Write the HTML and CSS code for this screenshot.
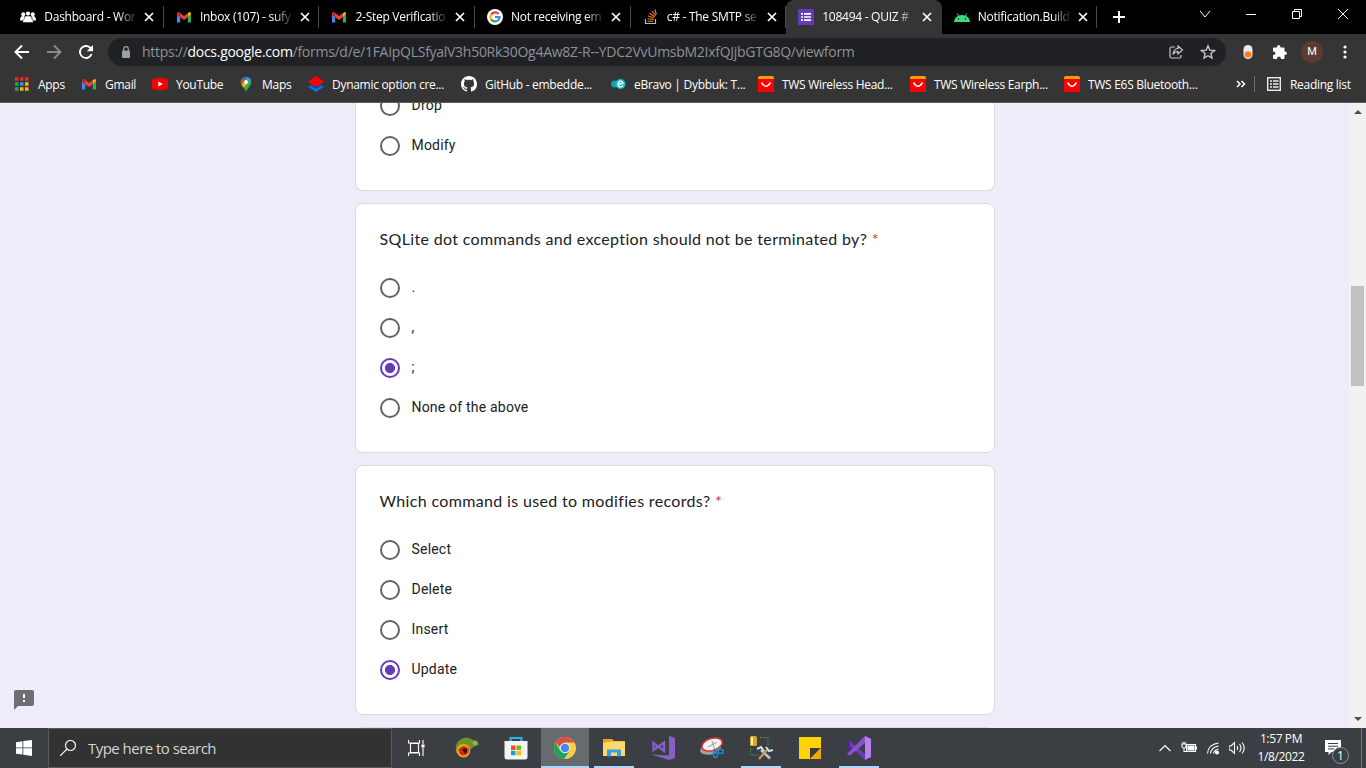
FILE: index.html
```html
<!DOCTYPE html>
<html lang="en">
<head>
<meta charset="utf-8">
<title>108494 - QUIZ #</title>
<link rel="stylesheet" href="styles.css">
</head>
<body>
<svg class="defs" width="0" height="0">
  <symbol id="close" viewBox="0 0 10 10"><path d="M1 1l8 8M9 1L1 9" stroke="#fff" stroke-width="1.7"/></symbol>
  <symbol id="gmail" viewBox="0 0 16 16"><path d="M1 4v9.500h3.200V7z" fill="#4285f4"/><path d="M15 4v9.500h-3.200V7z" fill="#34a853"/><path d="M11.800 4.500l1-1q2.200-1.200 2.200 1.200L11.800 8z" fill="#fbbc04"/><path d="M1 5Q1 2.500 3.200 3.300L8 7l3.800-3v4.200L8 11 4 8z" fill="#ea4335"/><path d="M1 4.700Q1 2.500 3 3.200L4.200 4v4.200L1 5.800z" fill="#c5221f"/></symbol>
  <symbol id="ali" viewBox="0 0 16 16"><rect width="16" height="16" rx="2" fill="#ff9800"/><path d="M0 3h16v11q0 2-2 2H2q-2 0-2-2z" fill="#f00"/><path d="M3.500 6.500Q8 14 12.500 6.500" fill="none" stroke="#fff" stroke-width="1.500"/></symbol>
  <symbol id="chrome" viewBox="0 0 24 24"><circle cx="12" cy="12" r="11" fill="#fc4"/><path d="M2.500 6.500A11 11 0 0 0 11 23l6-8.500-5-2.500-5 2.500z" fill="#1aa260"/><path d="M2.500 6.500A11 11 0 0 1 21.500 6.500H12L7 11z" fill="#dc4e41"/><circle cx="12" cy="12" r="5.200" fill="#eee"/><circle cx="12" cy="12" r="4.200" fill="#4587f3"/></symbol>
</svg>

<header class="tabs">
  <div class="tab"><svg class="ico" viewBox="0 0 16 16" fill="#fff"><circle cx="3.300" cy="5.200" r="2"/><circle cx="8" cy="4.600" r="2.100"/><circle cx="12.700" cy="5.200" r="2"/><path d="M0 11.500Q0 7 3 7q1.200 0 1.700.5L3 11.500zM16 11.500Q16 7 13 7q-1.200 0-1.700.5l1.700 4zM3 13.300q0-6 2.700-6h4.600q2.700 0 2.700 6z"/><path d="M5 7.500l-1.500 4M11 7.500l1.500 4" stroke="#000" stroke-width=".5"/></svg><span class="title">Dashboard - Wor</span><svg class="x"><use href="#close"/></svg></div>
  <div class="tab"><svg class="ico"><use href="#gmail"/></svg><span class="title">Inbox (107) - sufy</span><svg class="x"><use href="#close"/></svg></div>
  <div class="tab"><svg class="ico"><use href="#gmail"/></svg><span class="title">2-Step Verificatio</span><svg class="x"><use href="#close"/></svg></div>
  <div class="tab"><svg class="ico" viewBox="0 0 16 16"><circle cx="8" cy="8" r="8" fill="#fff"/><g fill="none" stroke-width="2.200"><path d="M4.200 5.600A4.500 4.500 0 0 1 11.500 5" stroke="#ea4335"/><path d="M4.200 10.400A4.500 4.500 0 0 1 4.200 5.600" stroke="#fbbc05"/><path d="M4.200 10.400A4.500 4.500 0 0 0 11 11.300" stroke="#34a853"/><path d="M8 8h4.500Q12.500 10 11 11.300" stroke="#4285f4"/></g></svg><span class="title">Not receiving em</span><svg class="x"><use href="#close"/></svg></div>
  <div class="tab"><svg class="ico" viewBox="0 0 16 16" fill="none"><path d="M2.500 10v4.500h10V10" stroke="#bcbbbb" stroke-width="1.200"/><path d="M4.500 12.300h6M4.600 9.700l6 .8M5.200 7l5.700 2M6.700 4.200l5 3.500M9 2l3.700 4.700M12 .5l1.300 5" stroke="#f48024" stroke-width="1.100"/></svg><span class="title">c# - The SMTP se</span><svg class="x"><use href="#close"/></svg></div>
  <div class="tab active"><svg class="ico" viewBox="0 0 16 16"><rect width="16" height="16" rx="1" fill="#673ab7"/><path d="M3 4.800h2M3 8h2M3 11.200h2M6 4.800h7M6 8h7M6 11.200h7" stroke="#fff" stroke-width="1.700"/></svg><span class="title">108494 - QUIZ #</span><svg class="x"><use href="#close"/></svg></div>
  <div class="tab"><svg class="ico" viewBox="0 0 16 16"><path d="M0 13q.5-4.500 4-6L2.700 4.500l.6-.3L4.800 6.600q3.200-1.200 6.400 0l1.500-2.400.6.3L12 7q3.500 1.500 4 6z" fill="#3ddc84"/><circle cx="4.500" cy="10" r=".7"/><circle cx="11.500" cy="10" r=".7"/></svg><span class="title">Notification.Build</span><svg class="x"><use href="#close"/></svg></div>
  <svg class="plus" viewBox="0 0 12 12"><path d="M6 0v12M0 6h12" stroke="#fff" stroke-width="2"/></svg>
  <div class="window-buttons">
    <svg viewBox="0 0 12 12"><path d="M1 3l5 6 5-6"/></svg>
    <svg viewBox="0 0 12 12"><path d="M1 6.500h10"/></svg>
    <svg viewBox="0 0 12 12"><path d="M1.500 3.500h7v7h-7zM3.500 3.500v-2h7v7h-2"/></svg>
    <svg viewBox="0 0 12 12"><path d="M1 1l10 10M11 1L1 11"/></svg>
  </div>
</header>

<div class="toolbar">
  <svg class="nav" viewBox="0 0 16 16"><path d="M15 8H2M8 1.500L1.500 8 8 14.500" stroke="#fff"/></svg>
  <svg class="nav" viewBox="0 0 16 16"><path d="M1 8h13M8 1.500L14.500 8 8 14.500" stroke="#8a8a8a"/></svg>
  <svg class="nav" viewBox="0 0 16 16"><path d="M13.600 10A6 6 0 1 1 12 3.500l1.500 1.500" stroke="#fff"/><path d="M15 1v6.200H8.800z" fill="#fff" stroke="none"/></svg>
  <div class="address">
    <svg class="lock" viewBox="0 0 10 12"><rect x="1" y="4.500" width="8" height="7.500" rx="1" fill="#9aa0a6"/><path d="M2.700 5V3a2.300 2.300 0 0 1 4.600 0v2" fill="none" stroke="#9aa0a6" stroke-width="1.200"/></svg>
    <span class="url"><span class="scheme">https://</span><b>docs.google.com</b><span class="path">/forms/d/e/1FAIpQLSfyalV3h50Rk30Og4Aw8Z-R--YDC2VvUmsbM2IxfQJjbGTG8Q/viewform</span></span>
    <svg class="act" viewBox="0 0 16 16" fill="none" stroke="#c4c7c9" stroke-width="1.200"><path d="M7 3H3.500Q2 3 2 4.500v8Q2 14 3.500 14h8q1.500 0 1.500-1.500V11"/><path d="M10 2l4.500 4L10 10V7.700Q6.500 7.500 5 10.500 5.500 5 10 4.500z"/></svg>
    <svg class="act" viewBox="0 0 16 16" fill="none" stroke="#c4c7c9" stroke-width="1.400"><path d="M8 1.800l1.800 4.300 4.700.4-3.600 3 1.100 4.600L8 11.700 4 14.100l1.100-4.600-3.600-3 4.700-.4z"/></svg>
  </div>
  <svg class="ext" viewBox="0 0 16 16"><rect x="3.500" y="1" width="9" height="14" rx="4.500" fill="#e8eaed"/><circle cx="8" cy="10.500" r="3.300" fill="#ff7a1a"/></svg>
  <svg class="ext puzzle" viewBox="0 0 16 16"><path d="M1 4.500Q1 3.500 2 3.500h3q-.3-2.500 1.700-2.500T8.500 3.500h3q1 0 1 1v3q2.500-.2 2.500 1.800t-2.500 1.700v3q0 1-1 1H9q.2-2.500-2-2.500T5 15H2q-1 0-1-1v-3q2.500.2 2.500-1.700T1 7.500z" fill="#fff"/></svg>
  <span class="avatar">M</span>
  <svg class="menu" viewBox="0 0 4 14" fill="#fff"><circle cx="2" cy="2" r="1.600"/><circle cx="2" cy="7" r="1.600"/><circle cx="2" cy="12" r="1.600"/></svg>
</div>

<nav class="bookmarks">
  <div class="bm"><svg class="ico" viewBox="0 0 16 16"><path d="M1 3h3.500M6 3h3.500M11 3h3.500" stroke="#ea2a1f" stroke-width="3.500"/><path d="M1 8h3.500" stroke="#1ca85a" stroke-width="3.500"/><path d="M6 8h3.500" stroke="#2196f3" stroke-width="3.500"/><path d="M11 8h3.500" stroke="#fbb400" stroke-width="3.500"/><path d="M1 13h3.500" stroke="#1ca85a" stroke-width="3.500"/><path d="M6 13h3.500M11 13h3.500" stroke="#fbb400" stroke-width="3.500"/></svg><span>Apps</span></div>
  <div class="bm"><svg class="ico"><use href="#gmail"/></svg><span>Gmail</span></div>
  <div class="bm"><svg class="ico" viewBox="0 0 16 16"><rect y="2.300" width="16" height="11.500" rx="3" fill="#f00"/><path d="M6.300 5.500v5L10.800 8z" fill="#fff"/></svg><span>YouTube</span></div>
  <div class="bm"><svg class="ico" viewBox="0 0 16 16"><path d="M2.700 6a5.300 5.300 0 0 1 10.600 0q0 3-2.500 5.500Q9 13 8 16 7 13 5.200 11 2.700 8.500 2.700 6z" fill="#34a853"/><path d="M9.700 1L5.500 6 4 3Q6.500 0 9.700 1z" fill="#1a73e8"/><path d="M4 2.700L6.500 5l-3 3.600Q1.500 5.500 4 2.700z" fill="#ea4335"/><path d="M3.700 9l6-7 3 1.500Q10.500 7 5.700 11.700z" fill="#fbbc04"/><path d="M9.700 1l3 2.500L9.500 7.500 8 6z" fill="#4285f4"/><circle cx="8" cy="6" r="1.900" fill="#fff"/></svg><span>Maps</span></div>
  <div class="bm"><svg class="ico" viewBox="0 0 16 16"><path d="M8 6.500l8 4-8 5.500-8-5.500z" fill="#0878e8"/><path d="M1.500 9.500L8 13l6.500-3.500L8 8z" fill="#064fa8"/><path d="M8 0l8 5.500-8 5.500-8-5.500z" fill="#f00"/></svg><span>Dynamic option cre...</span></div>
  <div class="bm"><svg class="ico" viewBox="0 0 16 16"><path fill="#fff" d="M8 0C3.580 0 0 3.580 0 8c0 3.540 2.290 6.530 5.470 7.590.4.070.55-.17.55-.38 0-.19-.01-.82-.01-1.490-2.010.37-2.530-.49-2.690-.94-.09-.23-.48-.94-.82-1.130-.28-.15-.68-.52-.01-.53.63-.01 1.080.58 1.230.82.72 1.210 1.870.87 2.330.66.07-.52.28-.87.51-1.070-1.780-.2-3.640-.89-3.640-3.950 0-.87.31-1.590.82-2.150-.08-.2-.36-1.020.08-2.120 0 0 .67-.21 2.200.82.64-.18 1.320-.27 2-.27s1.360.09 2 .27c1.530-1.040 2.200-.82 2.200-.82.44 1.100.16 1.920.08 2.120.51.56.82 1.270.82 2.150 0 3.070-1.870 3.750-3.650 3.950.29.25.54.73.54 1.480 0 1.070-.01 1.930-.01 2.200 0 .21.15.46.55.38A8.010 8.010 0 0 0 16 8c0-4.420-3.580-8-8-8z"/></svg><span>GitHub - embedde...</span></div>
  <div class="bm"><svg class="ico" viewBox="0 0 16 16"><ellipse cx="5" cy="8" rx="4" ry="3.500" fill="#06a6b5"/><ellipse cx="10.500" cy="8" rx="5" ry="5" fill="#0dbdcb"/><path d="M7.500 8.500L13 7.200Q12.500 5 10.500 5.200 8.200 5.500 8.200 8.200t2.500 2.700q1.300 0 2.300-1.300" fill="none" stroke="#fff" stroke-width="1.300"/></svg><span>eBravo | Dybbuk: T...</span></div>
  <div class="bm"><svg class="ico"><use href="#ali"/></svg><span>TWS Wireless Head...</span></div>
  <div class="bm"><svg class="ico"><use href="#ali"/></svg><span>TWS Wireless Earph...</span></div>
  <div class="bm"><svg class="ico"><use href="#ali"/></svg><span>TWS E6S Bluetooth...</span></div>
  <svg class="more" viewBox="0 0 10 8"><path d="M1 1l3 3-3 3M5.500 1l3 3-3 3" fill="none" stroke="#fff" stroke-width="1.500"/></svg>
  <div class="bm reading"><svg class="ico" viewBox="0 0 16 16" fill="none" stroke="#e8eaed"><rect x="1.700" y="1.700" width="12.600" height="12.600" stroke-width="1.400"/><path d="M4 5h2M4 8h2M4 11h2M7 5h5.500M7 8h5.500M7 11h5.500" stroke-width="1.500"/></svg><span>Reading list</span></div>
</nav>

<main class="page">
  <div class="form">
    <section class="card continued">
      <label class="option"><i class="radio"></i><span>Drop</span></label>
      <label class="option"><i class="radio"></i><span>Modify</span></label>
    </section>
    <section class="card">
      <h2>SQLite dot commands and exception should not be terminated by? <em>*</em></h2>
      <label class="option"><i class="radio"></i><span>.</span></label>
      <label class="option"><i class="radio"></i><span>,</span></label>
      <label class="option"><i class="radio on"></i><span>;</span></label>
      <label class="option"><i class="radio"></i><span>None of the above</span></label>
    </section>
    <section class="card">
      <h2>Which command is used to modifies records? <em>*</em></h2>
      <label class="option"><i class="radio"></i><span>Select</span></label>
      <label class="option"><i class="radio"></i><span>Delete</span></label>
      <label class="option"><i class="radio"></i><span>Insert</span></label>
      <label class="option"><i class="radio on"></i><span>Update</span></label>
    </section>
    <section class="card"></section>
  </div>
  <svg class="report" viewBox="0 0 20 20"><path d="M2 0h16q2 0 2 2v12q0 2-2 2H4l-4 4V2q0-2 2-2z" fill="#716d75"/><path d="M10 4v4M10 10v2" stroke="#fff" stroke-width="2"/></svg>
  <div class="scrollbar"><svg viewBox="0 0 8 4"><path d="M0 4l4-4 4 4z" fill="#505050"/></svg><div class="thumb"></div><svg viewBox="0 0 8 4"><path d="M0 0l4 4 4-4z" fill="#505050"/></svg></div>
</main>

<footer class="taskbar">
  <div class="start"><svg viewBox="0 0 16 16" fill="#fff"><path d="M0 2.200L6.500 1.300v6.200H0zM7.300 1.100L16 0v7.500H7.300zM0 8.300h6.500v6.300L0 13.700zM7.300 8.300H16V16l-8.700-1.200z"/></svg></div>
  <div class="search"><svg viewBox="0 0 16 16" fill="none" stroke="#f2f2f2" stroke-width="1.200"><circle cx="10.500" cy="5.500" r="5"/><path d="M7 9L0 16"/></svg><span>Type here to search</span></div>
  <div class="apps">
    <div class="app"><svg viewBox="0 0 24 24" fill="none" stroke="#fff" stroke-width="1.100"><path d="M4.500 4v3h11V4M4.500 20v-3h11v3M6.500 7.500h8v9h-8z"/><path d="M19 4v4M19 12v8"/><rect x="18" y="9" width="2" height="2" fill="#fff"/></svg></div>
    <div class="app"><svg viewBox="0 0 24 24" fill="none"><path d="M1.500 17Q-1 8 5 4 11-1 18 4q6 0 5.500 5l-5.500 2q-1 4-5 0L8 8q-3 2-4 9z" fill="#6f9424"/><circle cx="8.500" cy="14.800" r="5.500" fill="#2a1a0c" stroke="#f3a81c" stroke-width="2.600"/><path d="M4 13Q5 19 9 18.500q4-.5 4-4T9 11.500t-2.500 3 2.500 2" stroke="#e52e17" stroke-width="1.800"/><circle cx="20" cy="7" r="1.600" fill="#eee"/><circle cx="20" cy="7" r=".7" fill="#111"/></svg></div>
    <div class="app"><svg viewBox="0 0 24 24"><path d="M6.500 6V2h11v4" fill="none" stroke="#29b1ee" stroke-width="2.200"/><path d="M.5 5h23v16q0 2.500-2.500 2.500H3Q.5 23.500.5 21z" fill="#f3f3f3"/><path d="M7 9.500h4.500V14H7z" fill="#f25022"/><path d="M12.500 9.500H17V14h-4.500z" fill="#7fba00"/><path d="M7 14.800h4.500v4.500H7z" fill="#00a4ef"/><path d="M12.500 14.800H17v4.500h-4.500z" fill="#ffb900"/></svg></div>
    <div class="app current"><svg><use href="#chrome"/></svg></div>
    <div class="app open"><svg viewBox="0 0 24 24"><path d="M1 3h9l2 2h11v15H1z" fill="#e9a81e"/><path d="M1 7l10-1.500h12V20H1z" fill="#ffd86b"/><path d="M5 20.500v-7h14v7h-4v-4H9v4z" fill="#3d9de0"/></svg></div>
    <div class="app"><svg viewBox="0 0 24 24" fill="none"><path d="M18 0l6 2v20l-6 2L0 18.500l18 1z" fill="#865fc5"/><path d="M2.500 7v7L13 6.500v8.500z" stroke="#865fc5" stroke-width="2.300"/></svg></div>
    <div class="app"><svg viewBox="0 0 24 24" fill="none"><ellipse cx="10.500" cy="13" rx="10.500" ry="5.500" transform="rotate(-12 10.500 13)" fill="#9da2a5"/><ellipse cx="12" cy="8.500" rx="10.500" ry="6" transform="rotate(-18 12 8.500)" fill="#f2f2f2" stroke="#d93735" stroke-width="1.500"/><path d="M8 11l9-5M12 5l3 9" stroke="#939ca3"/><g stroke="#1687c9" stroke-width="1.700"><path d="M14 13l3 3"/><ellipse cx="15.500" cy="18.500" rx="2" ry="3"/><ellipse cx="20.500" cy="15.500" rx="3" ry="2"/></g></svg></div>
    <div class="app open"><svg viewBox="0 0 24 24" fill="none"><rect x="1" width="7" height="10" rx="1.500" fill="#d9a52a"/><path d="M3 1v8" stroke="#fff0ae" stroke-width="2"/><path d="M11 1.500h8v9M1.500 12v7h8" stroke="#4aa13a" stroke-dasharray="1.500 1.300"/><path d="M12 14l9 8.500" stroke="#b7c4d2" stroke-width="2.500"/><path d="M18 14l-8 9" stroke="#c39e50" stroke-width="2.300"/><path d="M8 13l4-2 3 4M17 11l3 4 4-1" stroke="#d4e0ec" stroke-width="2"/></svg></div>
    <div class="app"><svg viewBox="0 0 24 24"><path d="M1 1h22v22H1z" fill="#ffd208"/><path d="M12 12h11L12 23z" fill="#3b3b3b"/><path d="M23 12v11H12z" fill="#eda900"/></svg></div>
    <div class="app open"><svg viewBox="0 0 24 24"><path d="M0 6l3-1 15 13v6L3 10v5l-3 3z" fill="#6d3ab9"/><path d="M0 6l3-1v13.500L0 18z" fill="#56259d"/><path d="M0 18l3 1.500L18 7V0z" fill="#8c50d1"/><path d="M18 0l6 3v18l-6 3z" fill="#b680f2"/></svg></div>
  </div>
  <div class="tray">
    <svg viewBox="0 0 16 16"><path d="M2.500 11L8 5.500l5.500 5.500"/></svg>
    <svg viewBox="0 0 16 16"><path d="M5.500 4.500h9v7h-9zM1 4h4v2.500Q5 8 3 8T1 6.500zM2 1.800V4M4 1.800V4M3 8v3.500h2.500M15.500 6.500v3"/><path d="M7 6h6v4H7z" fill="#fff"/></svg>
    <svg viewBox="0 0 16 16"><path d="M2.500 13.500Q3 4.500 13.500 3M5.500 13.500Q6 7.500 13.500 6M8.500 13.500Q9 10 13.500 9"/><circle cx="12" cy="12.500" r="1.500" fill="#fff"/></svg>
    <svg viewBox="0 0 16 16"><path d="M0 6h2l3.500-3.500v11L2 10H0zM8 6q1.500 2 0 4M10.500 4q3 4 0 8M13 2.500q4.500 5.500 0 11"/></svg>
  </div>
  <div class="clock"><span>1:57 PM</span><span>1/8/2022</span></div>
  <div class="notice"><svg viewBox="0 0 16 16"><path d="M0 0h16v12H6.500L3.500 15v-3H0z" fill="#fff"/><path d="M3 3.500h10M3 6.200h10M3 8.900h6" stroke="#3b3f43" stroke-width="1"/></svg><span class="count">1</span></div>
</footer>
</body>
</html>
```

FILE: styles.css
```css
* { box-sizing: border-box; }
body { margin: 0; width: 1366px; height: 768px; overflow: hidden; display: flex; flex-direction: column; font-family: "Open Sans", "Noto Sans", sans-serif; font-size: 12px; }
.defs { position: absolute; }
svg { display: block; flex: none; }
.ico { width: 16px; height: 16px; }

.tabs { height: 34px; background: #000; display: flex; padding-left: 8.300px; color: #fff; }
.tab { width: 155.600px; height: 34px; display: flex; align-items: center; padding-left: 12px; border-right: 1px solid transparent; border-image: linear-gradient(transparent 7px, #4a4a4a 7px, #4a4a4a 27px, transparent 27px) 1; }
.tab .title { width: 94px; margin: -1px 6px 0 8px; white-space: nowrap; letter-spacing: -.27px; mask-image: linear-gradient(90deg, #000 74px, transparent 94px); }
.tab .x { width: 10px; height: 10px; }
.tab.active { background: #353535; border-image: none; border: 0; border-radius: 8px 8px 0 0; }
.plus { width: 12px; height: 12px; margin: 11px 0 0 16px; }
.window-buttons { display: flex; gap: 34px; margin: 8px 17px 0 auto; }
.window-buttons svg { width: 12px; height: 12px; fill: none; stroke: #fff; stroke-width: 1; }

.toolbar { height: 34px; background: #353535; display: flex; align-items: center; padding: 2px 0 0 14px; }
.nav { width: 16px; height: 16px; margin-right: 16px; fill: none; stroke-width: 1.900; }
.nav:nth-child(3) { margin-right: 14px; }
.address { width: 1118px; height: 28px; border-radius: 14px; background: #202124; display: flex; align-items: center; padding: 0 10px 0 13px; }
.lock { width: 10px; height: 12px; margin-right: 11px; }
.url { flex: 1; margin-top: -1px; font-size: 14px; white-space: nowrap; color: #8f9296; letter-spacing: -.28px; }
.url b { color: #fff; font-weight: 400; }
.act { width: 16px; height: 16px; margin-left: 16px; }
.ext { width: 16px; height: 16px; margin-left: 14px; }
.puzzle { margin-left: 16px; }
.avatar { width: 22px; height: 22px; border-radius: 50%; margin-left: 13px; background: #5d3a32; color: #fff; text-align: center; line-height: 22px; font-family: Roboto, sans-serif; font-size: 11px; }
.menu { width: 4px; height: 14px; margin-left: 20px; }

.bookmarks { height: 35px; background: #353535; border-bottom: 1px solid #5c5c5c; color: #fff; padding: 0 0 2px 14px; display: grid; align-items: center; grid-template-columns: 67px 71px 86px 70px 153px 149px 148px 152px 154px 172px 18px 1fr; }
.bm { display: flex; align-items: center; gap: 8px; white-space: nowrap; letter-spacing: -.29px; }
.more { width: 10px; height: 8px; }
.reading { height: 16px; border-left: 1px solid #707070; padding-left: 11px; }

.page { height: 625px; background: #f0ebf8; position: relative; overflow: hidden; display: flex; }
.form { width: 640px; margin-left: 355px; display: flex; flex-direction: column; gap: 12px; }
.card { flex: none; height: 250px; background: #fff; border: 1px solid #dadce0; border-radius: 8px; padding: 0 23.500px; color: #202124; }
.card.continued { height: 105px; margin-top: -17px; border-top: 0; border-radius: 0 0 8px 8px; }
.card h2 { margin: 0; height: 64px; padding-top: 23px; font: 400 16px/24px Lato, sans-serif; letter-spacing: .34px; white-space: nowrap; }
.card em { color: #d93025; font-style: normal; }
.option { height: 40px; display: flex; align-items: center; gap: 12px; font: 14px/20px Roboto, sans-serif; letter-spacing: .2px; }
.option span { margin-top: -2px; }
.radio { width: 20px; height: 20px; border: 2px solid #5f6368; border-radius: 50%; }
.radio.on { border-color: #673ab7; background: radial-gradient(circle, #673ab7 4.700px, transparent 5.300px); }
.report { position: absolute; left: 14px; bottom: 18px; width: 20px; height: 20px; }
.scrollbar { width: 17px; margin-left: auto; background: #f1f1f1; display: flex; flex-direction: column; align-items: center; padding: 7px 0; }
.scrollbar svg { width: 8px; height: 4px; }
.thumb { width: 13px; height: 100px; margin-top: 172px; margin-bottom: auto; background: #c1c1c1; }

.taskbar { height: 40px; background: #3b3f43; display: flex; color: #fff; position: relative; }
.start { width: 48px; display: flex; align-items: center; justify-content: center; }
.start svg { width: 16px; height: 16px; }
.search { width: 344px; background: #323232; border: 1px solid #5a5a5a; display: flex; align-items: center; padding-left: 11px; gap: 12px; font-size: 15px; color: #d5d5d5; letter-spacing: -.53px; }
.search svg { width: 16px; height: 16px; }
.apps { display: grid; grid-template-columns: repeat(10, 49px); padding-left: 2px; }
.app { display: flex; justify-content: center; padding-top: 8px; width: 48px; }
.app:first-child { margin-left: -2px; }
.app svg { width: 24px; height: 24px; }
.current { background: #676b6e; border-bottom: 2px solid #a9d6fa; }
.open { background: linear-gradient(#a9d6fa, #a9d6fa) center bottom / 40px 2px no-repeat; }
.tray { display: flex; align-items: center; gap: 8px; margin-left: auto; }
.tray svg { width: 16px; height: 16px; fill: none; stroke: #fff; stroke-width: 1.100; }
.clock { width: 56px; margin-left: 8px; display: flex; flex-direction: column; align-items: center; padding-top: 2px; line-height: 18px; letter-spacing: -.38px; white-space: nowrap; }
.notice { width: 53px; padding: 12px 0 0 16px; border-right: 1px solid #777; margin-right: 4px; position: relative; }
.notice svg { width: 16px; height: 16px; }
.count { position: absolute; left: 23px; top: 19px; width: 17px; height: 17px; border: 1px solid #909497; border-radius: 50%; background: #3b3f43; line-height: 15px; text-align: center; font-size: 12px; }
```
